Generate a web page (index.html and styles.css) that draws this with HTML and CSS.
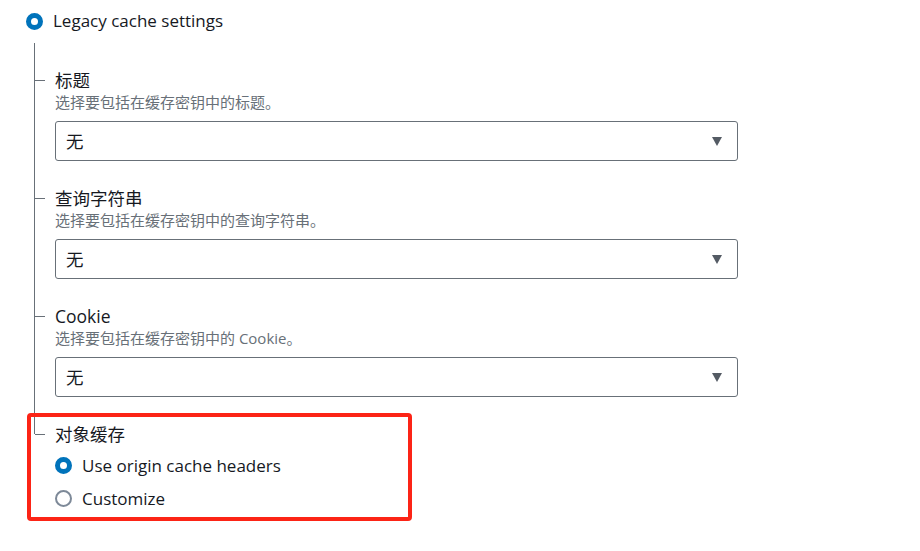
FILE: index.html
```html
<!DOCTYPE html>
<html lang="zh-CN">
<head>
<meta charset="utf-8">
<title>Legacy cache settings</title>
<link rel="stylesheet" href="styles.css">
</head>
<body>
<div class="page">
  <label class="option top-option">
    <span class="radio checked"></span>
    <span class="option-text">Legacy cache settings</span>
  </label>
  <div class="tree">
    <div class="field">
      <div class="label">标题</div>
      <div class="desc">选择要包括在缓存密钥中的标题。</div>
      <div class="select"><span class="select-value">无</span><span class="caret"></span></div>
    </div>
    <div class="field">
      <div class="label">查询字符串</div>
      <div class="desc">选择要包括在缓存密钥中的查询字符串。</div>
      <div class="select"><span class="select-value">无</span><span class="caret"></span></div>
    </div>
    <div class="field">
      <div class="label">Cookie</div>
      <div class="desc">选择要包括在缓存密钥中的 Cookie。</div>
      <div class="select"><span class="select-value">无</span><span class="caret"></span></div>
    </div>
    <div class="field last">
      <div class="label">对象缓存</div>
      <div class="radio-group">
        <label class="option"><span class="radio checked"></span><span class="option-text">Use origin cache headers</span></label>
        <label class="option"><span class="radio"></span><span class="option-text">Customize</span></label>
      </div>
    </div>
  </div>
  <div class="highlight"></div>
</div>
</body>
</html>
```

FILE: styles.css
```css
* { box-sizing: border-box; }
html, body { margin: 0; padding: 0; background: #ffffff; }
body {
  font-family: "Open Sans", "Noto Sans CJK SC", sans-serif;
  color: #16191f;
  font-size: 17px;
  line-height: 24px;
}
.page {
  position: relative;
  width: 920px;
  height: 551px;
  padding-left: 26px;
  padding-top: 9px;
}
.option {
  display: flex;
  align-items: center;
  gap: 10px;
  height: 33px;
}
.top-option { height: 24px; }
.radio {
  display: inline-block;
  width: 17px;
  height: 17px;
  border-radius: 50%;
  border: 2px solid #7d8998;
  background: #fff;
  flex: none;
}
.radio.checked {
  border: 5.5px solid #0073bb;
}
.tree {
  margin-top: 10px;
  margin-left: 8px;
  padding-top: 25px;
  position: relative;
}
.tree::before {
  content: "";
  position: absolute;
  left: 0;
  top: 0;
  height: 25px;
  border-left: 1px solid #687078;
}
.field {
  position: relative;
  padding-left: 21px;
  padding-bottom: 25px;
}
.field::before {
  content: "";
  position: absolute;
  left: 0;
  top: 0;
  bottom: 0;
  border-left: 1px solid #687078;
}
.field.last::before { bottom: auto; height: 12px; }
.field::after {
  content: "";
  position: absolute;
  left: 1px;
  top: 12px;
  width: 10px;
  border-top: 1px solid #687078;
}
.label { font-size: 17.5px; line-height: 24px; }
.desc {
  font-size: 15px;
  line-height: 20px;
  color: #687078;
  margin-bottom: 9px;
}
.select {
  width: 683px;
  height: 40px;
  border: 1px solid #687078;
  border-radius: 3px;
  display: flex;
  align-items: center;
  justify-content: space-between;
  padding: 0 15px 0 10px;
}
.select-value { font-size: 17.5px; }
.caret {
  width: 0;
  height: 0;
  border-left: 5.5px solid transparent;
  border-right: 5.5px solid transparent;
  border-top: 9px solid #545b64;
}
.radio-group { margin-top: 3px; }
.highlight {
  position: absolute;
  left: 27px;
  top: 413px;
  width: 385px;
  height: 108px;
  border: 4px solid #fc2416;
  border-radius: 4px;
  pointer-events: none;
}
```
